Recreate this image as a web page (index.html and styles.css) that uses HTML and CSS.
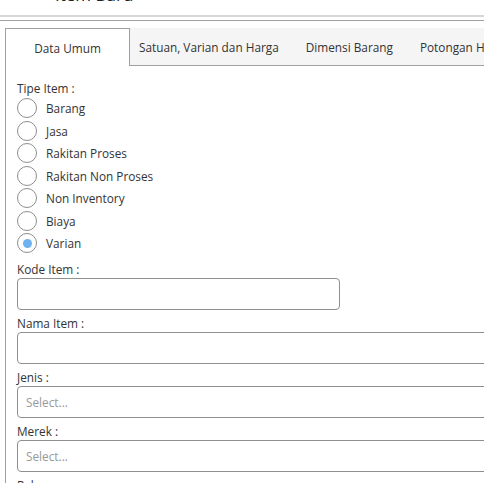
FILE: index.html
```html
<!DOCTYPE html>
<html lang="id">
<head>
<meta charset="utf-8">
<title>Item Baru</title>
<link rel="stylesheet" href="styles.css">
</head>
<body>
<div class="header"><h1 class="title">Item Baru</h1></div>
<div class="page">
  <div class="tabs-wrap">
    <div class="tabbar">
      <div class="tab active">Data Umum</div>
      <div class="tab first-inactive">Satuan, Varian dan Harga</div>
      <div class="tab">Dimensi Barang</div>
      <div class="tab">Potongan Harga</div>
    </div>
    <div class="panel">
      <div class="label label-top">Tipe Item :</div>
      <div class="radios">
        <div class="radio-row"><span class="radio"></span><span>Barang</span></div>
        <div class="radio-row"><span class="radio"></span><span>Jasa</span></div>
        <div class="radio-row"><span class="radio"></span><span>Rakitan Proses</span></div>
        <div class="radio-row"><span class="radio"></span><span>Rakitan Non Proses</span></div>
        <div class="radio-row"><span class="radio"></span><span>Non Inventory</span></div>
        <div class="radio-row"><span class="radio"></span><span>Biaya</span></div>
        <div class="radio-row"><span class="radio checked"></span><span>Varian</span></div>
      </div>
      <div class="label label-first">Kode Item :</div>
      <div class="input input-short"></div>
      <div class="label">Nama Item :</div>
      <div class="input"></div>
      <div class="label">Jenis :</div>
      <div class="input select"><span class="placeholder">Select...</span></div>
      <div class="label">Merek :</div>
      <div class="input select"><span class="placeholder">Select...</span></div>
      <div class="label">Rak :</div>
    </div>
  </div>
</div>
</body>
</html>
```
FILE: styles.css
```css
html, body {
  margin: 0;
  padding: 0;
  background: #fff;
  overflow: hidden;
}
body {
  font-family: "Open Sans", "Noto Sans", sans-serif;
  font-size: 11.8px;
  color: #333;
  width: 760px;
}
.header {
  display: flow-root;
  height: 15px;
  padding-left: 55px;
  border-bottom: 2px solid #d6d6d6;
  box-shadow: 0 -1px 0 #ececec;
}
.title {
  margin: -15px 0 0 0;
  font-size: 17px;
  font-weight: normal;
  line-height: 20px;
  color: #222;
}
.page {
  margin-top: 3px;
  border-top: 1px solid #a0a0a0;
  padding-top: 7px;
}
.tabs-wrap {
  margin-left: 5px;
  border-left: 1px solid #a0a0a0;
  min-height: 500px;
}
.tabbar {
  display: flex;
  height: 37px;
  background: #f5f5f5;
  border-bottom: 1px solid #a0a0a0;
}
.tab {
  display: flex;
  align-items: center;
  padding: 0 13.5px;
  white-space: nowrap;
  color: #333;
}
.tab.active {
  width: 124px;
  box-sizing: border-box;
  justify-content: center;
  padding: 0;
  background: #fff;
  border-top: 1px solid #a0a0a0;
  border-right: 1px solid #a0a0a0;
  height: 38px;
}
.tab.first-inactive {
  padding-left: 9px;
}
.panel {
  padding: 14px 0 0 11px;
}
.label {
  line-height: 18px;
  margin-top: 4px;
}
.label-top {
  margin-top: 0;
  line-height: 17px;
}
.label-first {
  margin-top: 5px;
}
.radio-row {
  display: flex;
  align-items: center;
  height: 22.5px;
  gap: 9px;
}
.radio {
  width: 20px;
  height: 20px;
  box-sizing: border-box;
  border: 1px solid #8e8e8e;
  border-radius: 50%;
  background: #fff;
  display: flex;
  align-items: center;
  justify-content: center;
}
.radio.checked::after {
  content: "";
  width: 9px;
  height: 9px;
  border-radius: 50%;
  background: #6fb2ef;
}
.input {
  height: 32px;
  box-sizing: border-box;
  border: 1px solid #8f8f8f;
  border-radius: 4px;
  width: 640px;
  display: flex;
  align-items: center;
}
.input-short {
  width: 323px;
}
.placeholder {
  padding-left: 8px;
  color: #999;
}
```
